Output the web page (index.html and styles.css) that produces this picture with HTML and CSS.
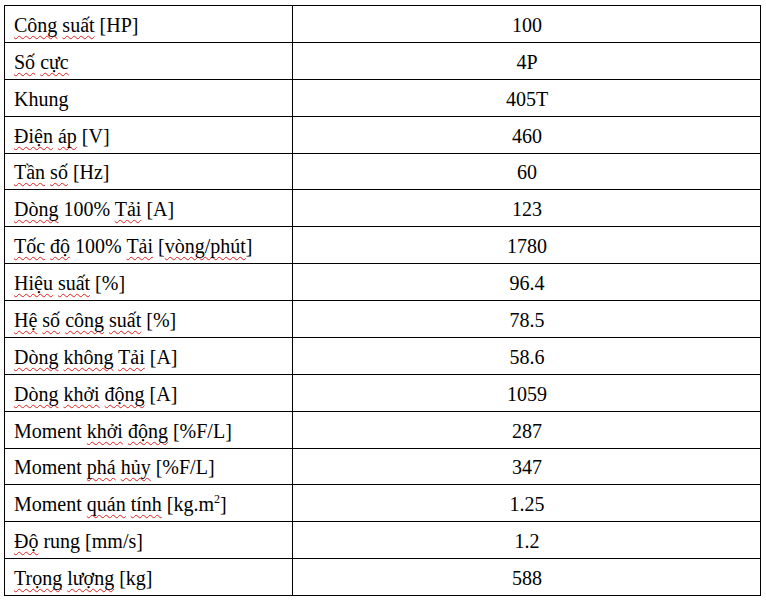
FILE: index.html
```html
<!DOCTYPE html>
<html lang="vi">
<head>
<meta charset="utf-8">
<link rel="stylesheet" href="styles.css">
</head>
<body>
<table class="spec">
  <colgroup><col class="c1"><col class="c2"></colgroup>
  <tr><td class="lbl"><span class="sp">Công</span> <span class="sp">suất</span> [HP]</td><td class="val">100</td></tr>
  <tr><td class="lbl"><span class="sp">Số</span> <span class="sp">cực</span></td><td class="val">4P</td></tr>
  <tr><td class="lbl">Khung</td><td class="val">405T</td></tr>
  <tr><td class="lbl"><span class="sp">Điện</span> <span class="sp">áp</span> [V]</td><td class="val">460</td></tr>
  <tr><td class="lbl"><span class="sp">Tần</span> <span class="sp">số</span> [Hz]</td><td class="val">60</td></tr>
  <tr><td class="lbl"><span class="sp">Dòng</span> 100% <span class="sp">Tải</span> [A]</td><td class="val">123</td></tr>
  <tr><td class="lbl"><span class="sp">Tốc</span> <span class="sp">độ</span> 100% <span class="sp">Tải</span> [<span class="sp">vòng/phút</span>]</td><td class="val">1780</td></tr>
  <tr><td class="lbl"><span class="sp">Hiệu</span> <span class="sp">suất</span> [%]</td><td class="val">96.4</td></tr>
  <tr><td class="lbl"><span class="sp">Hệ</span> <span class="sp">số</span> <span class="sp">công</span> <span class="sp">suất</span> [%]</td><td class="val">78.5</td></tr>
  <tr><td class="lbl"><span class="sp">Dòng</span> <span class="sp">không</span> <span class="sp">Tải</span> [A]</td><td class="val">58.6</td></tr>
  <tr><td class="lbl"><span class="sp">Dòng</span> <span class="sp">khởi</span> <span class="sp">động</span> [A]</td><td class="val">1059</td></tr>
  <tr><td class="lbl">Moment <span class="sp">khởi</span> <span class="sp">động</span> [%F/L]</td><td class="val">287</td></tr>
  <tr><td class="lbl">Moment <span class="sp">phá</span> <span class="sp">hủy</span> [%F/L]</td><td class="val">347</td></tr>
  <tr><td class="lbl">Moment <span class="sp">quán</span> <span class="sp">tính</span> [kg.m<sup class="sup">2</sup>]</td><td class="val">1.25</td></tr>
  <tr><td class="lbl"><span class="sp">Độ</span> rung [mm/s]</td><td class="val">1.2</td></tr>
  <tr><td class="lbl"><span class="sp">Trọng</span> <span class="sp">lượng</span> [kg]</td><td class="val">588</td></tr>
</table>
</body>
</html>
```

FILE: styles.css
```css
html, body {
  margin: 0;
  padding: 0;
  background: #ffffff;
}
body {
  padding: 5px 0 0 4px;
  font-family: "Liberation Serif", "Times New Roman", serif;
  font-size: 20px;
  color: #000000;
}
.spec {
  border-collapse: collapse;
  width: 757px;
  table-layout: fixed;
}
.c1 { width: 288px; }
.spec td {
  border: 1px solid #000000;
  height: 36.875px;
  padding: 2px 8px 0 9px;
  vertical-align: middle;
  box-sizing: border-box;
  line-height: 22px;
}
.val { text-align: center; }
.sp {
  text-decoration: underline wavy #e02020;
  text-decoration-thickness: 1px;
  text-underline-offset: 3px;
  text-decoration-skip-ink: none;
}
.sup {
  font-size: 12px;
  line-height: 0;
  vertical-align: 8px;
}
```
